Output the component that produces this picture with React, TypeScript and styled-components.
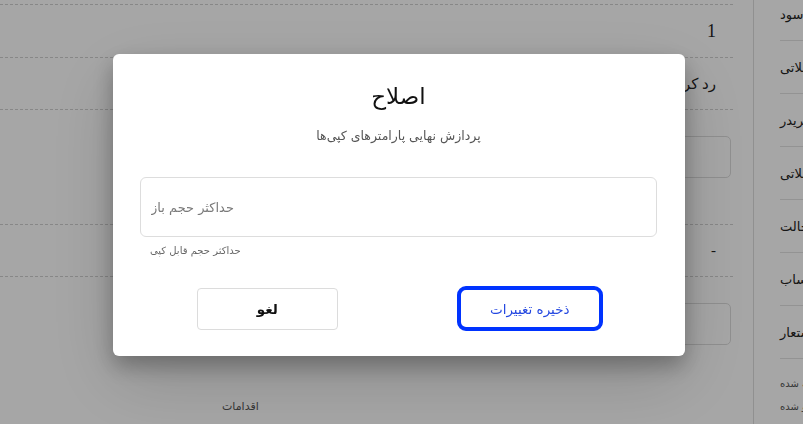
import React from "react";
import styled, { createGlobalStyle } from "styled-components";

const Global = createGlobalStyle`
  html, body { margin: 0; padding: 0; background: #fff; overflow: hidden; }
  body { width: 803px; height: 424px; font-family: "DejaVu Sans", sans-serif; }
  #root { width: 803px; height: 424px; overflow: hidden; }
`;

const Page = styled.div`
  display: flex;
  width: 880px;
  height: 424px;
  direction: ltr;
`;

const Main = styled.div`
  width: 733px;
  flex: none;
  padding: 4px 20px 0 0;
  display: flex;
  flex-direction: column;
  font-family: "Liberation Serif", "DejaVu Sans", serif;
`;

const Row = styled.div<{ $h: number }>`
  height: ${(p) => p.$h}px;
  box-sizing: border-box;
  border-top: 1px dashed #d0d0d0;
  display: grid;
  grid-template-columns: 1fr 150px;
  align-items: center;
`;

const Cell = styled.div<{ $size?: number }>`
  grid-column: 2;
  direction: rtl;
  text-align: right;
  padding-right: 17px;
  font-size: ${(p) => p.$size ?? 15}px;
  color: #222;
  white-space: nowrap;
`;

const FakeInput = styled.div`
  grid-column: 2;
  align-self: start;
  margin: 26px 2px 0 0;
  height: 40px;
  border: 1px solid #dcdcdc;
  border-radius: 5px;
`;

const Footer = styled.div`
  flex: 1;
  display: flex;
  align-items: flex-end;
  padding: 0 0 11px 222px;
  font-family: "DejaVu Sans", sans-serif;
  font-size: 11px;
  color: #555;
`;

const Sidebar = styled.nav`
  width: 127px;
  flex: none;
  border-left: 1px solid #dedede;
  display: flex;
  flex-direction: column;
  margin-top: -12px;
`;

const NavItem = styled.div`
  height: 53px;
  box-sizing: border-box;
  border-bottom: 1px solid #e2e2e2;
  margin-left: 26px;
  display: flex;
  align-items: center;
  font-size: 13px;
  color: #222;
  white-space: nowrap;
`;

const Label = styled.span`
  direction: rtl;
`;

const SmallList = styled.div`
  padding-top: 13px;
  margin-left: 26px;
  display: flex;
  flex-direction: column;
`;

const SmallItem = styled.div`
  height: 23px;
  display: flex;
  align-items: center;
  font-size: 10px;
  color: #555;
  white-space: nowrap;
`;

const Overlay = styled.div`
  position: fixed;
  inset: 0;
  background: rgba(0, 0, 0, 0.35);
  display: flex;
  justify-content: center;
  align-items: flex-start;
  padding: 54px 5px 0 0;
  box-sizing: border-box;
`;

const Modal = styled.div`
  width: 572px;
  box-sizing: border-box;
  background: #fff;
  border-radius: 6px;
  padding: 24px 28px 25px 27px;
  direction: rtl;
  box-shadow: 0 10px 22px rgba(0, 0, 0, 0.28), 0 24px 70px rgba(0, 0, 0, 0.16);
  display: flex;
  flex-direction: column;
`;

const Title = styled.h2`
  margin: 0;
  height: 36px;
  line-height: 36px;
  text-align: center;
  font-size: 23px;
  font-weight: normal;
  color: #111;
`;

const Subtitle = styled.p`
  margin: 14px 0 0;
  line-height: 16px;
  text-align: center;
  font-size: 12.5px;
  color: #555;
`;

const Input = styled.input`
  margin-top: 33px;
  height: 60px;
  box-sizing: border-box;
  border: 1px solid #dddddd;
  border-radius: 6px;
  padding: 0 10px;
  font-family: "DejaVu Sans", sans-serif;
  font-size: 13px;
  text-align: left;
  outline: none;
  &::placeholder { color: #7a7a7a; }
`;

const Help = styled.div`
  margin-top: 7px;
  line-height: 14px;
  font-size: 10px;
  color: #666;
  text-align: left;
  padding-left: 10px;
`;

const Actions = styled.div`
  margin-top: 28px;
  display: grid;
  grid-template-columns: 1fr 1fr;
  column-gap: 8px;
  justify-items: center;
  align-items: center;
`;

const Button = styled.button<{ $primary?: boolean }>`
  font-family: "DejaVu Sans", sans-serif;
  font-size: 13.5px;
  background: #fff;
  cursor: pointer;
  box-sizing: border-box;
  width: ${(p) => (p.$primary ? 146 : 141)}px;
  height: ${(p) => (p.$primary ? 45 : 42)}px;
  border: ${(p) => (p.$primary ? "4px solid #0033ff" : "1px solid #dcdcdc")};
  border-radius: ${(p) => (p.$primary ? 9 : 4)}px;
  color: ${(p) => (p.$primary ? "#2347e0" : "#111")};
  font-weight: ${(p) => (p.$primary ? "normal" : "bold")};
`;

const nav = ["گزارش سود", "پنل معاملاتی", "مدیر تریدر", "کپی معاملاتی", "تغییر حالت", "تسویه حساب", "نام مستعار"];

export default function App() {
  return (
    <>
      <Global />
      <Page>
        <Main>
          <Row $h={53}>
            <Cell $size={18}>1</Cell>
          </Row>
          <Row $h={52}>
            <Cell $size={15}>رد کردن</Cell>
          </Row>
          <Row $h={115}>
            <FakeInput />
          </Row>
          <Row $h={52}>
            <Cell $size={15}>-</Cell>
          </Row>
          <Row $h={94}>
            <FakeInput />
          </Row>
          <Footer>اقدامات</Footer>
        </Main>
        <Sidebar>
          {nav.map((n) => (
            <NavItem key={n}>
              <Label>{n}</Label>
            </NavItem>
          ))}
          <SmallList>
            <SmallItem>
              <Label>بسته شده</Label>
            </SmallItem>
            <SmallItem>
              <Label>لغو شده</Label>
            </SmallItem>
          </SmallList>
        </Sidebar>
      </Page>
      <Overlay>
        <Modal>
          <Title>اصلاح</Title>
          <Subtitle>پردازش نهایی پارامترهای کپی‌ها</Subtitle>
          <Input placeholder="حداکثر حجم باز" />
          <Help>حداکثر حجم قابل کپی</Help>
          <Actions>
            <Button $primary>ذخیره تغییرات</Button>
            <Button>لغو</Button>
          </Actions>
        </Modal>
      </Overlay>
    </>
  );
}
